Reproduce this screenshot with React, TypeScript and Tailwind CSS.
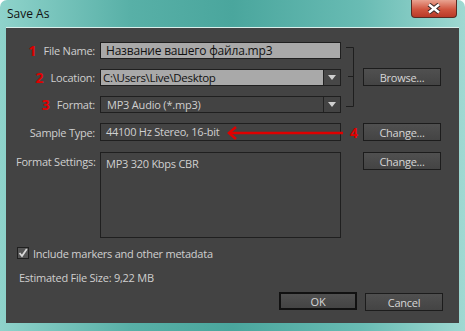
import React from "react";

const font = { fontFamily: '"Open Sans", "Noto Sans", sans-serif' };

const Btn = ({ label, strong }: { label: string; strong?: boolean }) => (
  <div
    className={`w-[78px] h-[18px] flex items-center justify-center text-[11px] tracking-[-0.25px] leading-none text-[#d6d6d6] bg-[linear-gradient(#505050,#444444)] ${
      strong ? "border-2 border-[#111]" : "border border-[#1c1c1c]"
    }`}
  >
    {label}
  </div>
);

const Label = ({ n, text }: { n?: string; text: string }) => (
  <div className="w-[94px] flex items-center justify-end gap-[7px] pr-[5px] text-[11px] tracking-[-0.25px] text-[#cfcfcf] leading-none">
    {n && <span className="text-[#e00000] font-bold text-[14px] leading-none tracking-normal">{n}</span>}
    <span>{text}</span>
  </div>
);

const Caret = () => (
  <div className="w-[17px] h-full border-l border-[#222] flex items-center justify-center">
    <svg width="8" height="5" viewBox="0 0 8 5">
      <path d="M0 0h8L4 5z" fill="#cfcfcf" />
    </svg>
  </div>
);

export default function App() {
  return (
    <div
      style={font}
      className="w-[465px] h-[331px] rounded-t-[7px] bg-[linear-gradient(90deg,#8fd3cb_0%,#58b0a7_28%,#4aa69d_50%,#69bcb4_78%,#9fd9d2_100%)] flex flex-col overflow-hidden"
    >
      {/* title bar */}
      <div className="h-[27px] flex items-start justify-between pl-[7px] pr-[8px]">
        <span className="text-[12px] leading-none text-[#111] mt-[8px]">Save As</span>
        <div className="w-[46px] h-[18px] rounded-b-[4px] border border-[#5a2a22] border-t-0 bg-[linear-gradient(#e9a391,#d0553f_55%,#b93a28)] flex items-center justify-center">
          <svg width="14" height="11" viewBox="0 0 14 11">
            <path d="M2 1.5l10 8M12 1.5l-10 8" stroke="#3b2a28" strokeWidth="4.5" />
            <path d="M2 1.5l10 8M12 1.5l-10 8" stroke="#fff" strokeWidth="2.5" />
          </svg>
        </div>
      </div>

      {/* body */}
      <div className="relative mx-[6px] h-[296px] bg-[#434343] border-t border-[#d9f0ec] pt-[14px] text-[11px] tracking-[-0.25px]">
        {/* top block */}
        <div className="flex">
          <div className="flex flex-col gap-[10px]">
            <div className="flex h-[17px]">
              <Label n="1" text="File Name:" />
              <div className="w-[241px] h-[17px] bg-[#a9a9a9] border border-[#1f1f1f] px-[5px] text-[12px] tracking-[-0.2px] text-[#111] leading-[15px]">
                Название вашего файла.mp3
              </div>
            </div>
            <div className="flex h-[17px]">
              <Label n="2" text="Location:" />
              <div className="w-[241px] h-[17px] bg-[#474747] border border-[#1f1f1f] flex">
                <div className="flex-1 bg-[#a9a9a9] px-[2px] text-[11.5px] tracking-[-0.3px] text-[#111] leading-[15px]">
                  C:\Users\Live\Desktop
                </div>
                <Caret />
              </div>
            </div>
            <div className="flex h-[17px]">
              <Label n="3" text="Format:" />
              <div className="w-[241px] h-[17px] bg-[#434343] border border-[#1f1f1f] flex">
                <div className="flex-1 px-[6px] text-[11px] tracking-[-0.2px] text-[#d0d0d0] leading-[15px]">MP3 Audio (*.mp3)</div>
                <Caret />
              </div>
            </div>
          </div>
          <svg width="22" height="62" viewBox="0 0 22 62" className="mt-[5px]">
            <path d="M5 0.5h7.5v59h-7.5M7 29.5h5.5" stroke="#1e1e1e" fill="none" />
          </svg>
          <div className="mt-[26px]">
            <Btn label="Browse..." />
          </div>
        </div>

        {/* sample type */}
        <div className="flex mt-[10px] h-[18px]">
          <Label text="Sample Type:" />
          <div className="w-[241px] h-[18px] border border-[#1f1f1f] px-[5px] text-[11px] tracking-[-0.25px] text-[#d0d0d0] leading-[16px]">
            44100 Hz Stereo, 16-bit
          </div>
          <div className="ml-[22px]">
            <Btn label="Change..." />
          </div>
        </div>

        {/* format settings */}
        <div className="flex mt-[11px] h-[86px]">
          <div className="w-[94px] pl-[10px] pt-[3px] text-[#cfcfcf] leading-[14px]">Format Settings:</div>
          <div className="w-[241px] h-[86px] border border-[#1f1f1f] px-[5px] pt-[3px] text-[11px] tracking-[-0.25px] leading-[16px] text-[#d0d0d0]">
            MP3 320 Kbps CBR
          </div>
          <div className="ml-[22px]">
            <Btn label="Change..." />
          </div>
        </div>

        {/* checkbox */}
        <div className="flex items-center gap-[4px] mt-[9px] ml-[11px] h-[12px] leading-none text-[#d0d0d0]">
          <div className="w-[12px] h-[12px] bg-[#555] border border-[#1f1f1f] flex items-center justify-center">
            <svg width="10" height="10" viewBox="0 0 10 10">
              <path d="M1.5 5l2.5 3L8.8 1" stroke="#d8d8d8" strokeWidth="1.8" fill="none" />
            </svg>
          </div>
          <span>Include markers and other metadata</span>
        </div>

        <div className="mt-[13px] ml-[13px] leading-none text-[#cfcfcf]">Estimated File Size: 9,22 MB</div>

        <div className="flex justify-end gap-[8px] mt-[10px] pr-[16px]">
          <div className="-mt-[1px]">
            <Btn label="OK" strong />
          </div>
          <Btn label="Cancel" />
        </div>

        {/* annotation arrow */}
        <div className="absolute left-[221px] top-[97px] flex items-center">
          <svg width="117" height="16" viewBox="0 0 117 16">
            <path d="M2 8h114" stroke="#e00000" strokeWidth="2.5" />
            <path d="M9 2L2 8l7 6" stroke="#e00000" strokeWidth="2.5" fill="none" />
          </svg>
          <span className="ml-[6px] text-[#e00000] font-bold text-[14px] leading-none tracking-normal">4</span>
        </div>
      </div>
    </div>
  );
}
